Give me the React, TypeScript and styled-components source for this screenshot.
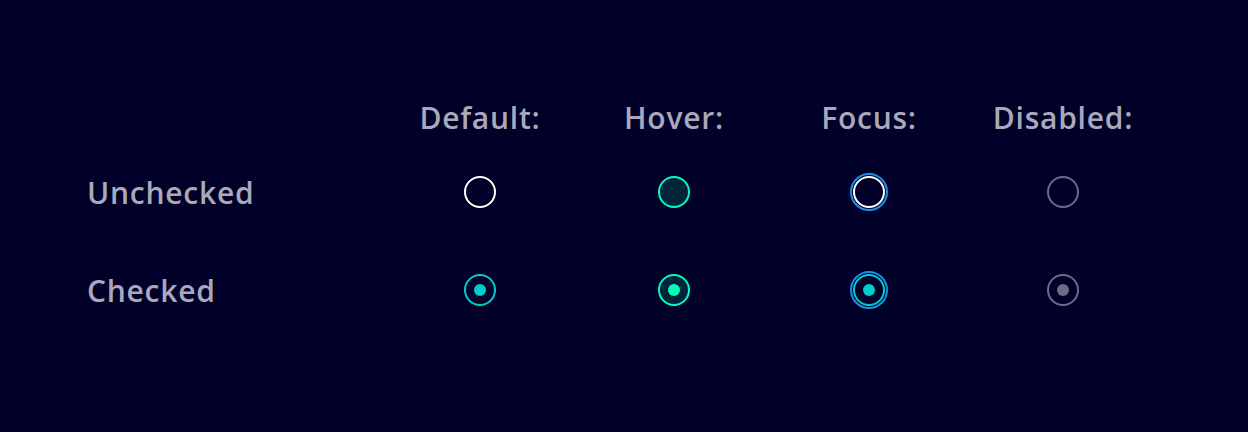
import React, { FC } from 'react';
import styled, { createGlobalStyle, css } from 'styled-components';

type RadioState = 'default' | 'hover' | 'focus' | 'disabled';

const states: { key: RadioState; title: string }[] = [
  { key: 'default', title: 'Default:' },
  { key: 'hover', title: 'Hover:' },
  { key: 'focus', title: 'Focus:' },
  { key: 'disabled', title: 'Disabled:' },
];

const rows = [
  { label: 'Unchecked', checked: false },
  { label: 'Checked', checked: true },
];

const GlobalStyle = createGlobalStyle`
  html, body {
    margin: 0;
    padding: 0;
    background: #000028;
  }
  body {
    font-family: 'Open Sans', 'Noto Sans', sans-serif;
  }
`;

const Page = styled.div`
  width: 1248px;
  height: 432px;
  box-sizing: border-box;
  padding: 91px 0 0 87px;
  background: #000028;
`;

const Table = styled.div`
  display: grid;
  grid-template-columns: 296px 194px 194px 196px 192px;
  grid-template-rows: 52px 98px 98px;
  align-items: center;
`;

const Header = styled.div`
  justify-self: center;
  color: #a9a9ba;
  font-size: 30px;
  font-weight: 600;
  letter-spacing: 0.75px;
`;

const RowLabel = styled.div`
  color: #a9a9ba;
  font-size: 30px;
  font-weight: 600;
  letter-spacing: 0.75px;
`;

const Cell = styled.div`
  display: flex;
  justify-content: center;
  align-items: center;
`;

const palette: Record<RadioState, { ring: string; checkedRing: string; fill: string }> = {
  default: { ring: '#ffffff', checkedRing: '#00cccc', fill: 'transparent' },
  hover: { ring: '#00ffb9', checkedRing: '#00ffb9', fill: '#00243a' },
  focus: { ring: '#ffffff', checkedRing: '#00cccc', fill: 'transparent' },
  disabled: { ring: '#6c6c86', checkedRing: '#6c6c86', fill: 'transparent' },
};

const Radio = styled.span<{ $state: RadioState; $checked: boolean }>`
  position: relative;
  display: block;
  width: 32px;
  height: 32px;
  box-sizing: border-box;
  border-radius: 50%;
  border: 2px solid
    ${({ $state, $checked }) => ($checked ? palette[$state].checkedRing : palette[$state].ring)};
  background: ${({ $state }) => palette[$state].fill};
  ${({ $state }) =>
    $state === 'focus' &&
    css`
      outline: 2px solid #1491eb;
      outline-offset: 1px;
    `}

  &::after {
    content: '';
    display: ${({ $checked }) => ($checked ? 'block' : 'none')};
    position: absolute;
    left: 50%;
    top: 50%;
    width: 12px;
    height: 12px;
    border-radius: 50%;
    transform: translate(-50%, -50%);
    background: ${({ $state }) => palette[$state].checkedRing};
  }
`;

const App: FC = () => {
  return (
    <>
      <GlobalStyle />
      <Page>
        <Table>
          <span />
          {states.map((s) => (
            <Header key={s.key}>{s.title}</Header>
          ))}
          {rows.map((row) => (
            <React.Fragment key={row.label}>
              <RowLabel>{row.label}</RowLabel>
              {states.map((s) => (
                <Cell key={s.key}>
                  <Radio $state={s.key} $checked={row.checked} />
                </Cell>
              ))}
            </React.Fragment>
          ))}
        </Table>
      </Page>
    </>
  );
};

export default App;
